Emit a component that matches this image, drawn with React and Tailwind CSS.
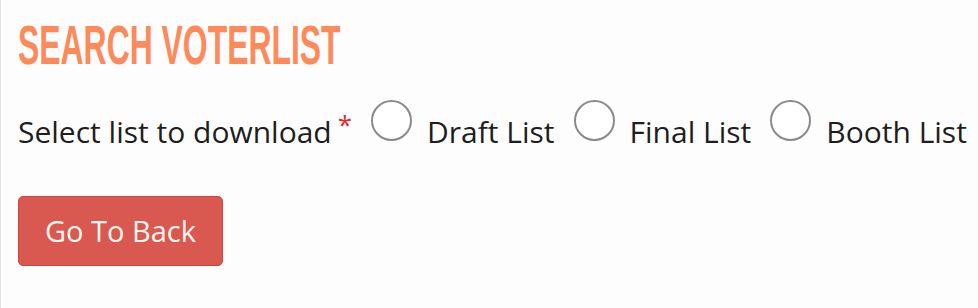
export default function App() {
  const options = ['Draft List', 'Final List', 'Booth List'];

  return (
    <div className="min-h-[308px] w-[978px] bg-[#fdfdfd] border-l border-[#e2e2e2] overflow-hidden font-['Open_Sans',sans-serif]">
      <div className="pl-[17px] pt-[22px]">
        <h1 className="origin-left scale-x-[0.58] whitespace-nowrap font-['Liberation_Sans',sans-serif] text-[55px] font-bold leading-[46px] text-[#fd8a5a]">
          SEARCH VOTERLIST
        </h1>

        <div className="mt-[44px] flex items-center text-[30px] leading-[40px] text-[#1e1e1e]">
          <span>Select list to download</span>
          <span className="ml-[6px] self-start -mt-[8px] text-[26px] text-[#e8262c]">*</span>
          {options.map((opt) => (
            <label key={opt} className="flex items-center">
              <span className="ml-[19px] -mt-[23px] h-[41px] w-[41px] rounded-full border-2 border-[#8a8a8a] bg-white" />
              <span className="ml-[15px]">{opt}</span>
            </label>
          ))}
        </div>

        <button className="mt-[44px] h-[70px] rounded-[5px] border border-[#d2463f] bg-[#d9584f] px-[26px] text-[29px] text-[#fff6f0]">
          Go To Back
        </button>
      </div>
    </div>
  );
}
